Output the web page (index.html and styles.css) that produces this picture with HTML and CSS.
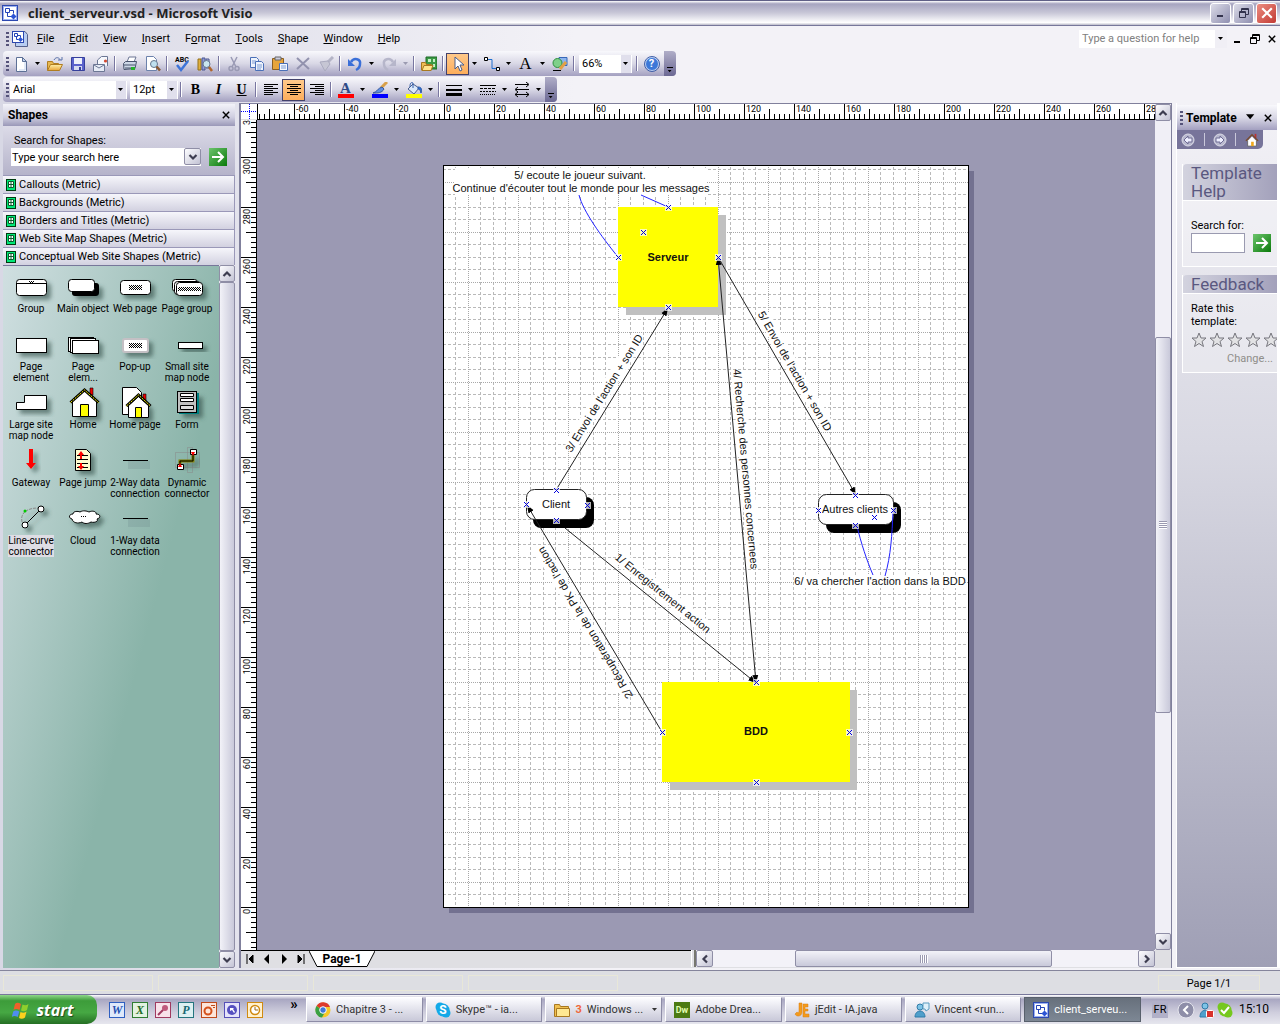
FILE: index.html
```html
<!DOCTYPE html>
<html lang="en">
<head>
<meta charset="utf-8">
<title>client_serveur.vsd - Microsoft Visio</title>
<link rel="stylesheet" href="styles.css">
</head>
<body>
<svg class="sprite" aria-hidden="true">
  <defs>
    <linearGradient id="g-folder" x1="0" y1="0" x2="0" y2="1"><stop offset="0" stop-color="#fff0a8"/><stop offset="1" stop-color="#e9a53a"/></linearGradient>
    <linearGradient id="g-green" x1="0" y1="0" x2="1" y2="1"><stop offset="0" stop-color="#6cc46c"/><stop offset="1" stop-color="#0a7a0a"/></linearGradient>
    <pattern id="dither" width="2" height="2" patternUnits="userSpaceOnUse"><path d="M0 0h1v1H0zM1 1h1v1H1z"/></pattern>
    <filter id="soft" x="-30%" y="-30%" width="180%" height="180%"><feDropShadow dx="4" dy="4" stdDeviation="2" flood-color="#30504a" flood-opacity=".6"/></filter>
  </defs>
  <symbol id="i-visio" viewBox="0 0 16 16"><rect x=".5" y=".5" width="15" height="15" fill="#fff" stroke="#2c48b0"/><rect x="1.500" y="1.500" width="13" height="13" fill="none" stroke="#9db2f2"/><path d="M3.500 3.500h4v4h-4zM8 5.500h3.500v3M5.500 8v3.500h4" fill="none" stroke="#2444b8"/><path d="M11.500 8.500l3 3-3 3-3-3z" fill="#2d55d4"/></symbol>
  <symbol id="i-visiodoc" viewBox="0 0 18 18"><path d="M7 1.500h7l2.500 3v12H4.500V12" fill="#b8cdf2" stroke="#55608c"/><rect x="1.500" y="1.500" width="11" height="11" fill="#fff" stroke="#2c48b0"/><path d="M3.500 3.500h3v3h-3zM7 5.500h2.500v2M5.500 7v2.500h2" fill="none" stroke="#2444b8"/><path d="M9.500 7l2.500 2.500L9.500 12 7 9.500z" fill="#2d55d4"/></symbol>
  <symbol id="i-new" viewBox="0 0 16 16"><path d="M3.500 1.500h6l4 4v10h-10z" fill="#fff" stroke="#5d7096"/><path d="M9.500 1.500v4h4z" fill="#c4d4f0" stroke="#5d7096"/><path d="M12 6v8H6" stroke="#c4d4f0" fill="none"/></symbol>
  <symbol id="i-open" viewBox="0 0 16 16"><path d="M.5 14V5.500h5l1 2h5V14z" fill="#e7b851" stroke="#b07d20"/><path d="M.5 14.500l3-6h12l-3 6z" fill="url(#g-folder)" stroke="#b07d20"/><path d="M7 4c2-4 6-2 6 0M11 4h4V1" fill="none" stroke="#5870a8"/></symbol>
  <symbol id="i-save" viewBox="0 0 16 16"><path d="M1.500 1.500h13v13h-12l-1-1z" fill="#5a62cc" stroke="#36409c"/><path d="M4 2h8v6H4z" fill="#edf0fa"/><path d="M4 10h8v4H4z" fill="#d5daf0"/><path d="M9 11h2v3H9z" fill="#36409c"/></symbol>
  <symbol id="i-mail" viewBox="0 0 16 16"><path d="M4.500 8V4l4-3.500h6V10" fill="#f6f8fd" stroke="#6c7794"/><path d="M.5 8.500h11v7H.5z" fill="#e6ebf6" stroke="#6c7794"/><path d="M1 9l5 3 5-3" fill="none" stroke="#6c7794"/><circle cx="12.500" cy="5" r="1.600" fill="#d34a32"/></symbol>
  <symbol id="i-print" viewBox="0 0 16 16"><path d="M5 6l2-5h7l-2 5" fill="#fff" stroke="#6c7794"/><path d="M1.500 7.500l2-2h11l-1.500 7-11 1z" fill="#ccd6e6" stroke="#47526c"/><path d="M2 9h11M3 12h9" stroke="#47526c"/><path d="M9 11h4v3H9z" fill="#26b12c"/></symbol>
  <symbol id="i-preview" viewBox="0 0 16 16"><path d="M1.500.5h7l3 3v11h-10z" fill="#fff" stroke="#6c82ac"/><circle cx="9" cy="8" r="3.500" fill="#bfe0ef" stroke="#66788f"/><path d="M11.500 10.500l3.500 4" stroke="#8a5a34" stroke-width="2.500"/></symbol>
  <symbol id="i-research" viewBox="0 0 16 16"><path d="M1 3h3v11H1z" fill="#e0b040" stroke="#937018"/><path d="M5 2h3v12H5z" fill="#8f9ad8" stroke="#4b5690"/><path d="M9 3h3v9H9z" fill="#b5b9e0" stroke="#4b5690"/><circle cx="9.500" cy="8" r="3.500" fill="#c9e6ef" stroke="#66788f"/><path d="M12 11l3 4" stroke="#b0662c" stroke-width="2.500"/></symbol>
  <symbol id="i-cut" viewBox="0 0 16 16"><path d="M5 1l5 10M11 1L6 11" stroke="#9a9ab4" stroke-width="1.500"/><circle cx="5" cy="12.500" r="2" fill="none" stroke="#9a9ab4" stroke-width="1.500"/><circle cx="11" cy="12.500" r="2" fill="none" stroke="#9a9ab4" stroke-width="1.500"/></symbol>
  <symbol id="i-copy" viewBox="0 0 16 16"><path d="M1.500 1.500h6l2 2v8h-8z" fill="#eef3fc" stroke="#4a70b8"/><path d="M6.500 5.500h6l2 2v7h-8z" fill="#eef3fc" stroke="#4a70b8"/><path d="M3 5h4M3 7h3M8 9h5M8 11h5M8 13h4" stroke="#7f9dd4"/></symbol>
  <symbol id="i-paste" viewBox="0 0 16 16"><path d="M.5 2.500h11v11H.5z" fill="#e7a43a" stroke="#8a5f22"/><path d="M3 1h6v3H3z" fill="#ccd" stroke="#666"/><path d="M7.500 7.500h8v7h-8z" fill="#f4f7fd" stroke="#4a70b8"/><path d="M9 10h5M9 12h5" stroke="#7f9dd4"/></symbol>
  <symbol id="i-delete" viewBox="0 0 16 16"><path d="M2 2l12 11M14 2L2 13" stroke="#9292ae" stroke-width="2"/></symbol>
  <symbol id="i-painter" viewBox="0 0 16 16"><path d="M15 1l-5 5" stroke="#b4b4c6" stroke-width="3"/><path d="M2 6l8-1 2 3-5 7z" fill="#c6c6d4" stroke="#aaaabf"/></symbol>
  <symbol id="i-undo" viewBox="0 0 16 16"><path d="M4 6c3-5 10-3 9 2 0 3-2 5-4 6" fill="none" stroke="#3a6fd8" stroke-width="2.500"/><path d="M1 3v7h7z" fill="#3a6fd8"/></symbol>
  <symbol id="i-redo" viewBox="0 0 16 16"><path d="M12 6C9 1 2 3 3 8c0 3 2 5 4 6" fill="none" stroke="#b6b6ca" stroke-width="2.500"/><path d="M15 3v7H8z" fill="#b6b6ca"/></symbol>
  <symbol id="i-stencil" viewBox="0 0 16 16"><path d="M5 1h11v12H5z" fill="#3b9b45" stroke="#1e6b28"/><path d="M7 3h3v3H7zM12 3h2v3h-2zM12 8h2v3h-2z" fill="#c7efc7"/><path d="M.5 14V6.500h4l1 2h5V14z" fill="#eebd55" stroke="#a87820"/><path d="M1 14.500l2-5h9l-2 5z" fill="#ffe38c" stroke="#a87820"/></symbol>
  <symbol id="i-pointer" viewBox="0 0 16 16"><path d="M5 1v12l3-3 2 5 2-1-2-5h4z" fill="#fff" stroke="#4a5e8c"/></symbol>
  <symbol id="i-connector" viewBox="0 0 16 16"><path d="M4 3.500h4v9h4" fill="none" stroke="#1f6fd0"/><path d="M.5 1.500h3v3h-3zM12.500 11.500h3v3h-3z" fill="#fff" stroke="#000"/></symbol>
  <symbol id="i-draw" viewBox="0 0 16 16"><path d="M7 1.500h8v8H7z" fill="#8db4ee" stroke="#3768b8"/><circle cx="5.500" cy="7" r="4.500" fill="#7fd08a" stroke="#2f8f40"/><path d="M14 6l-6 7" stroke="#e3a046" stroke-width="3"/><path d="M1 14.500h8" stroke="#000"/></symbol>
  <symbol id="i-left" viewBox="0 0 16 16"><path d="M1 2.500h14M1 4.500h9M1 6.500h14M1 8.500h9M1 10.500h14M1 12.500h9" stroke="#000"/></symbol>
  <symbol id="i-center" viewBox="0 0 16 16"><path d="M1 2.500h14M4 4.500h8M1 6.500h14M4 8.500h8M1 10.500h14M4 12.500h8" stroke="#000"/></symbol>
  <symbol id="i-right" viewBox="0 0 16 16"><path d="M1 2.500h14M6 4.500h9M1 6.500h14M6 8.500h9M1 10.500h14M6 12.500h9" stroke="#000"/></symbol>
  <symbol id="i-brush" viewBox="0 0 16 16"><path d="M15 0l-6 6" stroke="#d8a04a" stroke-width="3"/><path d="M10 5l2 2c-2 4-6 4-11 4 4-1 5-5 9-6z" fill="#5f8ee0" stroke="#34579c"/><path d="M0 12h16v4H0z" fill="#00f"/></symbol>
  <symbol id="i-fill" viewBox="0 0 16 16"><path d="M7 2l6 4-5 6-6-5z" fill="#dbe8fa" stroke="#4a5e8c"/><path d="M7 6V1c-2-1-3 0-3 4" fill="none" stroke="#2f5aa8"/><path d="M12 5c4 0 4 3 3 6-1-3-1-4-3-4z" fill="#2f6fd0" stroke="#2f5aa8"/><path d="M0 12h16v4H0z" fill="#ff0"/></symbol>
  <symbol id="i-weight" viewBox="0 0 16 16"><path d="M0 3.500h16" stroke="#000"/><path d="M0 8h16" stroke="#000" stroke-width="2"/><path d="M0 12.500h16" stroke="#000" stroke-width="3"/></symbol>
  <symbol id="i-dash" viewBox="0 0 16 16"><path d="M0 3.500h16" stroke="#000"/><path d="M0 6.500h16" stroke="#000" stroke-dasharray="3 1"/><path d="M0 9.500h16" stroke="#000" stroke-dasharray="2 1"/><path d="M0 12.500h16" stroke="#000" stroke-dasharray="1 1"/></symbol>
  <symbol id="i-ends" viewBox="0 0 16 16"><path d="M1 2.500h13M2 7.500h13M1 12.500h14M12 0l3 2.500-3 2.500M4 5L1 7.500 4 10M12 10l3 2.500-3 2.500M4 10l-3 2.500L4 15" fill="none" stroke="#000"/></symbol>
  <symbol id="i-drop" viewBox="0 0 6 4"><path d="M0 0h5L2.500 3z" fill="currentColor"/></symbol>
  <symbol id="i-chev" viewBox="0 0 10 10"><path d="M1.500 3L5 6.500 8.500 3" fill="none" stroke="#3d3d50" stroke-width="2.200"/></symbol>
  <symbol id="i-x" viewBox="0 0 10 10"><path d="M1 1l8 8M9 1L1 9" stroke="currentColor" stroke-width="1.800"/></symbol>
  <symbol id="i-go" viewBox="0 0 18 18"><rect width="18" height="18" fill="url(#g-green)"/><path d="M3 9h11M9 4l5 5-5 5" fill="none" stroke="#fff" stroke-width="2"/></symbol>
  <symbol id="i-stencilgrid" viewBox="0 0 10 12"><rect x=".5" y=".5" width="9" height="11" fill="#00e878" stroke="#003a10"/><path d="M2.500 2.500h5v6h-5zM5 2.500v6M2.500 5.500h5" fill="#fff" stroke="#0a5a2a"/></symbol>
  <symbol id="i-home" viewBox="0 0 16 16"><path d="M3 8h10v7H3z" fill="#fff" stroke="#666"/><path d="M11 1h2v5h-2z" fill="#b33"/><path d="M1 9l7-7 7 7" fill="none" stroke="#7a4a2a" stroke-width="1.500"/><path d="M3 9l5-5 5 5" fill="#fff"/><path d="M7 10h3v5H7z" fill="#f0a81c"/></symbol>
  <symbol id="i-navleft" viewBox="0 0 14 14"><circle cx="7" cy="7" r="6" fill="#b9b9cf" stroke="#d9d9e6"/><path d="M7 3L3 7l4 4V9h4V5H7z" fill="#eef" stroke="#6c6a92"/></symbol>
  <symbol id="i-navright" viewBox="0 0 14 14"><circle cx="7" cy="7" r="6" fill="#b9b9cf" stroke="#d9d9e6"/><path d="M7 3l4 4-4 4V9H3V5h4z" fill="#eef" stroke="#6c6a92"/></symbol>
  <symbol id="i-star" viewBox="0 0 16 16"><path d="M8 1l2 5h5l-4 3.500 1.500 5L8 11.500l-4.500 3 1.500-5L1 6h5z" fill="#e2e2e4" stroke="#77777e"/></symbol>
  <symbol id="i-restore" viewBox="0 0 12 12"><path d="M3.500 4V1.500h7v6H8M3.500 2.500h7M1.500 4.500h6v6h-6zM1.500 5.500h6" fill="none" stroke="currentColor"/></symbol>
  <symbol id="i-min" viewBox="0 0 12 12"><path d="M2 8h6v2H2z" fill="currentColor"/></symbol>
  <symbol id="i-flag" viewBox="0 0 20 18"><path d="M3 3c2-2 4-1 6 0L7.500 9C5.500 8 3.500 7.500 1.500 9z" fill="#f0602a"/><path d="M10.500 3.500c2 1 4 1 6-.5L15 9c-2 1.500-4 1.500-6 .5z" fill="#8fd02c"/><path d="M1.200 10.500c2-1.500 4-1 6 0L5.700 16c-2-1-4-1.500-6 0z" fill="#4f8df0"/><path d="M8.500 11c2 1 4 1 6-.5L13 16.500c-2 1.500-4 1.500-6 .5z" fill="#fcd01e"/></symbol>
</svg>

<header class="titlebar">
  <svg class="ic16"><use href="#i-visio"/></svg>
  <h1>client_serveur.vsd - Microsoft Visio</h1>
  <button class="win" aria-label="Minimize"><svg><use href="#i-min"/></svg></button>
  <button class="win" aria-label="Restore"><svg><use href="#i-restore"/></svg></button>
  <button class="win close" aria-label="Close"><svg><use href="#i-x"/></svg></button>
</header>

<nav class="menubar">
  <i class="grip"></i>
  <svg class="ic18"><use href="#i-visiodoc"/></svg>
  <div class="menus"><button><u>F</u>ile</button><button><u>E</u>dit</button><button><u>V</u>iew</button><button><u>I</u>nsert</button><button>F<u>o</u>rmat</button><button><u>T</u>ools</button><button><u>S</u>hape</button><button><u>W</u>indow</button><button><u>H</u>elp</button></div>
  <div class="ask"><input type="text" aria-label="Help question" placeholder="Type a question for help"><button aria-label="Recent questions"><svg class="drop"><use href="#i-drop"/></svg></button></div>
  <button class="doc" aria-label="Minimize document"><svg><use href="#i-min"/></svg></button>
  <button class="doc" aria-label="Restore document"><svg><use href="#i-restore"/></svg></button>
  <button class="doc" aria-label="Close document"><svg class="small"><use href="#i-x"/></svg></button>
</nav>

<div class="toolbars">
  <div class="toolbar" role="toolbar" aria-label="Standard">
    <i class="grip"></i>
    <button class="tb" aria-label="New"><svg><use href="#i-new"/></svg></button><button class="arr" aria-label="New options"><svg class="drop"><use href="#i-drop"/></svg></button>
    <button class="tb" aria-label="Open"><svg><use href="#i-open"/></svg></button>
    <button class="tb" aria-label="Save"><svg><use href="#i-save"/></svg></button>
    <button class="tb" aria-label="E-mail"><svg><use href="#i-mail"/></svg></button>
    <i class="sep"></i>
    <button class="tb" aria-label="Print"><svg><use href="#i-print"/></svg></button>
    <button class="tb" aria-label="Print preview"><svg><use href="#i-preview"/></svg></button>
    <i class="sep"></i>
    <button class="tb" aria-label="Spelling"><svg viewBox="0 0 16 16"><text x="8" y="6" class="abc">ABC</text><path d="M3 9l4 5 7-9" fill="none" stroke="#3d74d8" stroke-width="2.500"/></svg></button>
    <button class="tb" aria-label="Research"><svg><use href="#i-research"/></svg></button>
    <i class="sep"></i>
    <button class="tb" aria-label="Cut"><svg><use href="#i-cut"/></svg></button>
    <button class="tb" aria-label="Copy"><svg><use href="#i-copy"/></svg></button>
    <button class="tb" aria-label="Paste"><svg><use href="#i-paste"/></svg></button>
    <button class="tb" aria-label="Delete"><svg><use href="#i-delete"/></svg></button>
    <button class="tb" aria-label="Format painter"><svg><use href="#i-painter"/></svg></button>
    <i class="sep"></i>
    <button class="tb" aria-label="Undo"><svg><use href="#i-undo"/></svg></button><button class="arr" aria-label="Undo list"><svg class="drop"><use href="#i-drop"/></svg></button>
    <button class="tb" aria-label="Redo"><svg><use href="#i-redo"/></svg></button><button class="arr off" aria-label="Redo list"><svg class="drop"><use href="#i-drop"/></svg></button>
    <i class="sep"></i>
    <button class="tb" aria-label="Shapes"><svg><use href="#i-stencil"/></svg></button>
    <i class="sep"></i>
    <button class="tb on" aria-label="Pointer tool"><svg><use href="#i-pointer"/></svg></button><button class="arr" aria-label="Pointer options"><svg class="drop"><use href="#i-drop"/></svg></button>
    <button class="tb" aria-label="Connector tool"><svg><use href="#i-connector"/></svg></button><button class="arr" aria-label="Connector options"><svg class="drop"><use href="#i-drop"/></svg></button>
    <button class="tb letter big">A</button><button class="arr" aria-label="Text options"><svg class="drop"><use href="#i-drop"/></svg></button>
    <button class="tb" aria-label="Drawing tools"><svg><use href="#i-draw"/></svg></button>
    <i class="sep"></i>
    <div class="combo zoom"><select aria-label="Zoom"><option>66%</option></select><svg class="drop"><use href="#i-drop"/></svg></div>
    <i class="sep"></i>
    <button class="tb" aria-label="Help"><span class="help-dot">?</span></button>
    <button class="cap" aria-label="Toolbar options"><svg><use href="#i-drop"/></svg></button>
  </div>
  <div class="toolbar" role="toolbar" aria-label="Formatting">
    <i class="grip"></i>
    <div class="combo font"><select aria-label="Font"><option>Arial</option></select><svg class="drop"><use href="#i-drop"/></svg></div>
    <div class="combo size"><select aria-label="Font size"><option>12pt</option></select><svg class="drop"><use href="#i-drop"/></svg></div>
    <i class="sep"></i>
    <button class="tb letter">B</button><button class="tb letter"><em>I</em></button><button class="tb letter"><u>U</u></button>
    <i class="sep"></i>
    <button class="tb" aria-label="Align left"><svg><use href="#i-left"/></svg></button>
    <button class="tb on" aria-label="Center"><svg><use href="#i-center"/></svg></button>
    <button class="tb" aria-label="Align right"><svg><use href="#i-right"/></svg></button>
    <i class="sep"></i>
    <button class="tb" aria-label="Text color"><span class="fontcolor">A</span></button><button class="arr" aria-label="Text colors"><svg class="drop"><use href="#i-drop"/></svg></button>
    <button class="tb" aria-label="Line color"><svg><use href="#i-brush"/></svg></button><button class="arr" aria-label="Line colors"><svg class="drop"><use href="#i-drop"/></svg></button>
    <button class="tb" aria-label="Fill color"><svg><use href="#i-fill"/></svg></button><button class="arr" aria-label="Fill colors"><svg class="drop"><use href="#i-drop"/></svg></button>
    <i class="sep"></i>
    <button class="tb" aria-label="Line weight"><svg><use href="#i-weight"/></svg></button><button class="arr" aria-label="Line weights"><svg class="drop"><use href="#i-drop"/></svg></button>
    <button class="tb" aria-label="Line pattern"><svg><use href="#i-dash"/></svg></button><button class="arr" aria-label="Line patterns"><svg class="drop"><use href="#i-drop"/></svg></button>
    <button class="tb" aria-label="Line ends"><svg><use href="#i-ends"/></svg></button><button class="arr" aria-label="Line end styles"><svg class="drop"><use href="#i-drop"/></svg></button>
    <button class="cap" aria-label="Toolbar options"><svg><use href="#i-drop"/></svg></button>
  </div>
</div>

<main class="work">
  <aside class="shapes">
    <div class="panehead"><h2>Shapes</h2><button aria-label="Close shapes"><svg><use href="#i-x"/></svg></button></div>
    <form class="find">
      <label for="q">Search for Shapes:</label>
      <div class="findrow">
        <div class="findbox"><input id="q" type="text" value="Type your search here"><button type="button" class="sb" aria-label="Recent searches"><svg><use href="#i-chev"/></svg></button></div>
        <button type="button" class="go" aria-label="Search"><svg><use href="#i-go"/></svg></button>
      </div>
    </form>
    <button class="stencil"><svg><use href="#i-stencilgrid"/></svg>Callouts (Metric)</button>
    <button class="stencil"><svg><use href="#i-stencilgrid"/></svg>Backgrounds (Metric)</button>
    <button class="stencil"><svg><use href="#i-stencilgrid"/></svg>Borders and Titles (Metric)</button>
    <button class="stencil"><svg><use href="#i-stencilgrid"/></svg>Web Site Map Shapes (Metric)</button>
    <button class="stencil"><svg><use href="#i-stencilgrid"/></svg>Conceptual Web Site Shapes (Metric)</button>
    <div class="stencilbody">
      <ul class="masters">
        <li><svg viewBox="0 0 44 32"><g filter="url(#soft)" fill="#fff" stroke="#000"><rect x="7.500" y="8.500" width="30" height="16" rx="3"/></g><path d="M8 12.500h29" stroke="#000"/><path d="M20 10h5v2h-5z" fill="url(#dither)"/></svg><span>Group</span></li>
        <li><svg viewBox="0 0 44 32"><g filter="url(#soft)"><rect x="11" y="12" width="27" height="13" rx="3"/></g><rect x="7.500" y="8.500" width="26" height="12" rx="3" fill="#fff" stroke="#000"/></svg><span>Main object</span></li>
        <li><svg viewBox="0 0 44 32"><rect x="7.500" y="9.500" width="30" height="14" rx="3" fill="#fff" stroke="#000" filter="url(#soft)"/><path d="M16 14h13v5H16z" fill="url(#dither)"/></svg><span>Web page</span></li>
        <li><svg viewBox="0 0 44 32"><g filter="url(#soft)" fill="#fff" stroke="#000"><rect x="7.500" y="8.500" width="25" height="12" rx="3"/><rect x="9.500" y="10.500" width="26" height="13" rx="3"/><rect x="11.500" y="11.500" width="26" height="13" rx="3"/></g><path d="M13 16h23v4H13z" fill="url(#dither)"/></svg><span>Page group</span></li>
        <li><svg viewBox="0 0 44 32"><rect x="7.500" y="9.500" width="30" height="14" fill="#fff" stroke="#000" filter="url(#soft)"/></svg><span>Page<br>element</span></li>
        <li><svg viewBox="0 0 44 32"><g filter="url(#soft)" fill="#fff" stroke="#000"><rect x="7.500" y="8.500" width="25" height="14"/><rect x="9.500" y="9.500" width="25" height="14"/><rect x="11.500" y="11.500" width="26" height="13"/></g></svg><span>Page<br>elem...</span></li>
        <li><svg viewBox="0 0 44 32"><rect x="10" y="10" width="25" height="13" rx="2" fill="#fff" stroke="#c4c0c4" stroke-width="2" filter="url(#soft)"/><path d="M16 14h13v5H16z" fill="url(#dither)"/></svg><span>Pop-up</span></li>
        <li><svg viewBox="0 0 44 32"><rect x="13.500" y="13.500" width="24" height="6" fill="#fff" stroke="#000" filter="url(#soft)"/></svg><span>Small site map node</span></li>
        <li><svg viewBox="0 0 44 32"><path d="M7.500 22.500v-7h8v-7h22v14z" fill="#fff" stroke="#000" filter="url(#soft)"/></svg><span>Large site map node</span></li>
        <li><svg viewBox="0 0 44 32"><path d="M11.500 12.500L23.500 2.500l12 10v17h-24z" fill="#fff" stroke="#000" filter="url(#soft)"/><path d="M29 1h3v7h-3z" fill="#e00" stroke="#000" stroke-width=".6"/><path d="M9.500 15.500L23.500 3l14 12.500" fill="none" stroke="#000" stroke-width="3"/><path d="M9.500 15.500L23.500 3l14 12.500" fill="none" stroke="#ff0" stroke-dasharray="2 1"/><path d="M19.500 17.500h8v12h-8z" fill="#ff0" stroke="#000"/></svg><span>Home</span></li>
        <li><svg viewBox="0 0 44 32"><path d="M9.500.5h14l5 5v22h-19z" fill="#fff" stroke="#000"/><path d="M15.500 18.500l10-9 10 9v12h-20z" fill="#fff" stroke="#000" filter="url(#soft)"/><path d="M30 7h3v7h-3z" fill="#e00" stroke="#000" stroke-width=".6"/><path d="M13.500 19L25.500 8l12 11" fill="none" stroke="#000" stroke-width="3"/><path d="M13.500 19L25.500 8l12 11" fill="none" stroke="#ff0" stroke-dasharray="2 1"/><path d="M22.500 20.500h6v10h-6z" fill="#ff0" stroke="#000"/></svg><span>Home page</span></li>
        <li><svg viewBox="0 0 44 32"><path d="M14 6h20v21H14z" fill="#008080" filter="url(#soft)"/><rect x="12.500" y="4.500" width="19" height="21" fill="#c0c0c0" stroke="#000"/><path d="M15.500 6.500h13v3h-13zM15.500 11.500h13v3h-13z" fill="#fff" stroke="#000"/><path d="M15.500 18.500h13v4h-13z" fill="#ddd" stroke="#000"/></svg><span>Form</span></li>
        <li><svg viewBox="0 0 44 32"><path d="M20 4h4v14h3l-5 6-5-6h3z" fill="#f00" filter="url(#soft)"/></svg><span>Gateway</span></li>
        <li><svg viewBox="0 0 44 32"><path d="M14.500 4.500h11l4 4v17h-15z" fill="#fffbd0" stroke="#000" filter="url(#soft)"/><path d="M16 10.500h11M16 14.500h11M16 18.500h11M16 22.500h11" stroke="#000"/><path d="M20 25l-3-4h2v-3h2v3h2zM20 6l-3 4h2v4h2v-4h2z" fill="#f00"/></svg><span>Page jump</span></li>
        <li><svg viewBox="0 0 44 32"><path d="M10 15.500h25" stroke="#000"/><path d="M15 16h22v8H15z" fill="#456" opacity=".12"/></svg><span>2-Way data connection</span></li>
        <li><svg viewBox="0 0 44 32"><path d="M10.500 7.500h24v15h-24zM22.500 2.500h5v25h-5z" fill="none" stroke="#888" stroke-dasharray="1 1"/><path d="M15 20v-4h13v-7" fill="none" stroke="#808000" stroke-width="3" filter="url(#soft)"/><path d="M15 20v-4h13v-7" fill="none" stroke="#000"/><path d="M12.500 19.500h6v5h-6zM25.500 4.500h6v5h-6z" fill="#fff" stroke="#000"/><path d="M15 18l2 4h-4zM28 11l2-4h-4z" fill="#f00"/></svg><span>Dynamic connector</span></li>
        <li class="sel"><svg viewBox="0 0 44 32"><g filter="url(#soft)"><path d="M16 22L32 6" stroke="#000"/><path d="M13 19c-2-9 5-14 16-14" fill="none" stroke="#888" stroke-dasharray="3 1"/><circle cx="32" cy="6" r="3" fill="#fff" stroke="#000"/><circle cx="16" cy="22" r="3" fill="#fff" stroke="#000"/></g><circle cx="16" cy="8" r="1.500" fill="#0c0"/></svg><span>Line-curve connector</span></li>
        <li><svg viewBox="0 0 44 32"><path d="M11 16c-4-1-3-5 1-5 0-3 5-3 7-2 3-2 7-1 9 0 4-2 8 0 7 2 5 0 5 4 1 5 2 3-4 4-6 3-3 2-7 2-9 0-4 2-9 1-10-3z" fill="#fff" stroke="#000" filter="url(#soft)"/><path d="M20 13.500h6" stroke="#000" stroke-dasharray="1 1"/></svg><span>Cloud</span></li>
        <li><svg viewBox="0 0 44 32"><path d="M10 15.500h25" stroke="#000"/><path d="M15 16h22v8H15z" fill="#456" opacity=".12"/></svg><span>1-Way data connection</span></li>
      </ul>
      <div class="vscroll">
        <button class="sb" aria-label="Scroll up"><svg class="up"><use href="#i-chev"/></svg></button>
        <i class="thumb"></i>
        <button class="sb" aria-label="Scroll down"><svg><use href="#i-chev"/></svg></button>
      </div>
    </div>
  </aside>

  <section class="canvas" aria-label="Drawing">
    <svg class="corner"><path d="M0 7.500h16M8.500 0v15" stroke="#00f" stroke-dasharray="1 1"/></svg>
    <svg class="hruler">
      <defs><pattern id="ticks-h" x="36" width="50" height="15" patternUnits="userSpaceOnUse"><path d="M.5 0v15M5.500 10v5M10.500 10v5M15.500 10v5M20.500 10v5M25.500 5v10M30.500 10v5M35.500 10v5M40.500 10v5M45.500 10v5" stroke="#000"/></pattern></defs>
      <rect width="100%" height="15" fill="url(#ticks-h)"/>
      <text x="38" y="8">-60</text><text x="88" y="8">-40</text><text x="138" y="8">-20</text><text x="188" y="8">0</text><text x="238" y="8">20</text><text x="288" y="8">40</text><text x="338" y="8">60</text><text x="388" y="8">80</text><text x="438" y="8">100</text><text x="488" y="8">120</text><text x="538" y="8">140</text><text x="588" y="8">160</text><text x="638" y="8">180</text><text x="688" y="8">200</text><text x="738" y="8">220</text><text x="788" y="8">240</text><text x="838" y="8">260</text><text x="888" y="8">28</text>
    </svg>
    <svg class="vruler">
      <defs><pattern id="ticks-v" y="37" width="15" height="50" patternUnits="userSpaceOnUse"><path d="M0 .5h15M10 5.500h5M10 10.500h5M10 15.500h5M10 20.500h5M5 25.500h10M10 30.500h5M10 35.500h5M10 40.500h5M10 45.500h5" stroke="#000"/></pattern></defs>
      <rect width="15" height="100%" fill="url(#ticks-v)"/>
      <g text-anchor="end"><text transform="translate(9 0) rotate(-90)">3</text><text transform="translate(9 39) rotate(-90)">300</text><text transform="translate(9 89) rotate(-90)">280</text><text transform="translate(9 139) rotate(-90)">260</text><text transform="translate(9 189) rotate(-90)">240</text><text transform="translate(9 239) rotate(-90)">220</text><text transform="translate(9 289) rotate(-90)">200</text><text transform="translate(9 339) rotate(-90)">180</text><text transform="translate(9 389) rotate(-90)">160</text><text transform="translate(9 439) rotate(-90)">140</text><text transform="translate(9 489) rotate(-90)">120</text><text transform="translate(9 539) rotate(-90)">100</text><text transform="translate(9 589) rotate(-90)">80</text><text transform="translate(9 639) rotate(-90)">60</text><text transform="translate(9 689) rotate(-90)">40</text><text transform="translate(9 739) rotate(-90)">20</text><text transform="translate(9 789) rotate(-90)">0</text></g>
    </svg>
    <svg class="drawing">
      <defs>
        <pattern id="grid" x="443" y="157" width="50" height="50" patternUnits="userSpaceOnUse">
          <path d="M.5 0v50M12.500 0v50M37.500 0v50M0 .5h50M0 12.500h50M0 37.500h50" stroke="#b9b9b9" stroke-dasharray="3 2"/>
          <path d="M25.500 0v50M0 25.500h50" stroke="#a8a8a8" stroke-dasharray="1 1"/>
        </pattern>
        <marker id="head" viewBox="0 0 8 8" refX="8" refY="4" markerWidth="8" markerHeight="8" orient="auto-start-reverse"><path d="M0 1l8 3-8 3z"/></marker>
        <g id="pt"><path d="M-3-3h7v7h-7z" fill="#fff" fill-opacity=".7"/><path d="M-2-2l5 5M3-2l-5 5" stroke="#00d" fill="none"/></g>
      </defs>
      <g transform="translate(-257 -120)">
        <rect x="449" y="171" width="525" height="742" fill="#737190"/>
        <rect x="443.500" y="165.500" width="525" height="742" fill="#fff" stroke="#000"/>
        <rect x="444" y="166" width="524" height="741" fill="url(#grid)"/>
        <g fill="#fff">
          <rect x="455" y="168" width="251" height="27"/>
          <rect x="796" y="575" width="169" height="13"/>
          <rect x="-64" y="-7" width="128" height="13" transform="translate(604 393) rotate(-58)"/>
          <rect x="-64" y="-7" width="128" height="13" transform="translate(795 371) rotate(60)"/>
          <rect x="-97" y="-7" width="194" height="13" transform="translate(746 469) rotate(85)"/>
          <rect x="-56" y="-7" width="112" height="13" transform="translate(663 593) rotate(39)"/>
          <rect x="-82" y="-7" width="164" height="13" transform="translate(585 623) rotate(-121)"/>
        </g>
        <g fill="#c0c0c0"><rect x="626" y="215" width="100" height="100"/><rect x="670" y="690" width="187" height="100"/></g>
        <g fill="#ff0"><rect x="618" y="207" width="100" height="100"/><rect x="662" y="682" width="188" height="100"/></g>
        <rect x="533" y="497" width="61" height="31" rx="8"/><rect x="826" y="502" width="75" height="31" rx="8"/>
        <g fill="#fff" stroke="#222"><rect x="526.500" y="489.500" width="60" height="30" rx="8"/><rect x="818.500" y="494.500" width="75" height="30" rx="8"/></g>
        <g stroke="#222" fill="none">
          <path d="M556 490L668 308" marker-end="url(#head)"/>
          <path d="M718 257L856 495" marker-end="url(#head)"/>
          <path d="M718 257L756 683" marker-start="url(#head)" marker-end="url(#head)"/>
          <path d="M565 528L756 683" marker-end="url(#head)"/>
          <path d="M662 732L527 505" marker-end="url(#head)"/>
        </g>
        <g stroke="#22f" fill="none">
          <path d="M579 195C583 211 601 236 618 257M641 195L668 207M857 526C861 543 867 561 873 575M893 511C892 535 891 555 885 576"/>
        </g>
        <g class="label">
          <text x="580" y="179">5/ ecoute le joueur suivant.</text>
          <text x="581" y="192">Continue d'écouter tout le monde pour les messages</text>
          <text x="880" y="585">6/ va chercher l'action dans la BDD</text>
          <text x="556" y="508">Client</text>
          <text x="855" y="513">Autres clients</text>
          <text x="668" y="261" class="strong">Serveur</text>
          <text x="756" y="735" class="strong">BDD</text>
          <text y="4" transform="translate(604 393) rotate(-58)">3/ Envoi de l'action + son ID</text>
          <text y="4" transform="translate(795 371) rotate(60)">5/ Envoi de l'action + son ID</text>
          <text y="4" transform="translate(746 469) rotate(85)">4/ Recherche des personnes concernees</text>
          <text y="4" transform="translate(663 593) rotate(39)">1/ Enregistrement action</text>
          <text y="4" transform="translate(585 623) rotate(-121)">2/ Récupération de la PK de l'action</text>
        </g>
        <use href="#pt" x="668" y="207"/><use href="#pt" x="643" y="232"/><use href="#pt" x="618" y="257"/><use href="#pt" x="718" y="257"/><use href="#pt" x="668" y="307"/>
        <use href="#pt" x="556" y="490"/><use href="#pt" x="526" y="504"/><use href="#pt" x="587" y="505"/><use href="#pt" x="556" y="520"/>
        <use href="#pt" x="855" y="495"/><use href="#pt" x="818" y="510"/><use href="#pt" x="893" y="510"/><use href="#pt" x="874" y="517"/><use href="#pt" x="855" y="525"/>
        <use href="#pt" x="756" y="682"/><use href="#pt" x="662" y="732"/><use href="#pt" x="849" y="732"/><use href="#pt" x="756" y="782"/>
      </g>
    </svg>
    <div class="vscroll main">
      <button class="sb" aria-label="Scroll up"><svg class="up"><use href="#i-chev"/></svg></button>
      <i class="track before"></i><i class="thumb ribbed"></i><i class="track after"></i>
      <button class="sb" aria-label="Scroll down"><svg><use href="#i-chev"/></svg></button>
    </div>
    <div class="pages">
      <button aria-label="First page"><svg viewBox="0 0 8 10"><path d="M1 0v10M7 1L3 5l4 4z" stroke="#000"/></svg></button>
      <button aria-label="Previous page"><svg viewBox="0 0 8 10"><path d="M6 0L1 5l5 5z"/></svg></button>
      <button aria-label="Next page"><svg viewBox="0 0 8 10"><path d="M2 0l5 5-5 5z"/></svg></button>
      <button aria-label="Last page"><svg viewBox="0 0 8 10"><path d="M7 0v10M1 1l4 4-4 4z" stroke="#000"/></svg></button>
      <button class="tab"><svg viewBox="0 0 66 17"><path d="M0 0l8 15.500h50L66 0" fill="#fff" stroke="#000"/></svg><b>Page-1</b></button>
    </div>
    <div class="hscroll">
      <i class="split"></i>
      <button class="sb" aria-label="Scroll left"><svg class="lt"><use href="#i-chev"/></svg></button>
      <i class="track before"></i><i class="thumb ribbed"></i><i class="track after"></i>
      <button class="sb" aria-label="Scroll right"><svg class="rt"><use href="#i-chev"/></svg></button>
    </div>
  </section>

  <aside class="task">
    <div class="taskhead"><i class="grip"></i><h2>Template</h2><button aria-label="Other task panes"><svg class="tri"><use href="#i-drop"/></svg></button><button aria-label="Close pane"><svg class="small"><use href="#i-x"/></svg></button></div>
    <div class="tasknav"><button aria-label="Back"><svg><use href="#i-navleft"/></svg></button><i></i><button aria-label="Forward"><svg><use href="#i-navright"/></svg></button><i></i><button aria-label="Home"><svg><use href="#i-home"/></svg></button></div>
    <section class="card help">
      <h3>Template Help</h3>
      <div class="cardbody"><label for="hs">Search for:</label><div class="row"><input id="hs" type="text"><button class="go" aria-label="Search help"><svg><use href="#i-go"/></svg></button></div></div>
    </section>
    <section class="card feedback">
      <h3>Feedback</h3>
      <div class="cardbody"><p>Rate this template:</p><div class="stars"><button aria-label="1 star"><svg><use href="#i-star"/></svg></button><button aria-label="2 stars"><svg><use href="#i-star"/></svg></button><button aria-label="3 stars"><svg><use href="#i-star"/></svg></button><button aria-label="4 stars"><svg><use href="#i-star"/></svg></button><button aria-label="5 stars"><svg><use href="#i-star"/></svg></button></div><a href="#change">Change...</a></div>
    </section>
  </aside>
</main>

<footer class="status"><span></span><span></span><span></span><span></span><span class="pageno">Page 1/1</span></footer>

<div class="taskbar">
  <button class="start"><svg><use href="#i-flag"/></svg>start</button>
  <div class="quick">
    <button aria-label="Word"><svg viewBox="0 0 16 16"><rect x=".5" y=".5" width="15" height="15" fill="#dfe9fb" stroke="#2f5fc0"/><text x="8" y="12" class="app" fill="#2450b0">W</text></svg></button>
    <button aria-label="Excel"><svg viewBox="0 0 16 16"><rect x=".5" y=".5" width="15" height="15" fill="#e2f2e0" stroke="#2f7d32"/><text x="8" y="12" class="app" fill="#1f6d26">X</text></svg></button>
    <button aria-label="Access"><svg viewBox="0 0 16 16"><rect x=".5" y=".5" width="15" height="15" fill="#f8e2ea" stroke="#a03a60"/><circle cx="10" cy="6" r="3" fill="#c0587c"/><path d="M8 8l-5 5" stroke="#a03a60" stroke-width="2"/></svg></button>
    <button aria-label="Publisher"><svg viewBox="0 0 16 16"><rect x=".5" y=".5" width="15" height="15" fill="#ddf0f2" stroke="#24757f"/><text x="8" y="12" class="app" fill="#186872">P</text></svg></button>
    <button aria-label="PowerPoint"><svg viewBox="0 0 16 16"><rect x=".5" y=".5" width="15" height="15" fill="#fde5da" stroke="#c04a1c"/><circle cx="7" cy="9" r="3.500" fill="none" stroke="#d4511c" stroke-width="2"/><path d="M10 3.500h4M12 5.500h2" stroke="#c04a1c"/></svg></button>
    <button aria-label="InfoPath"><svg viewBox="0 0 16 16"><rect x=".5" y=".5" width="15" height="15" fill="#e6e4fa" stroke="#5650b8"/><circle cx="8" cy="8" r="5" fill="#5650c0"/><path d="M6 6h4l-1 1 2 3-1 1-2-3-2 1z" fill="#fff"/></svg></button>
    <button aria-label="Outlook"><svg viewBox="0 0 16 16"><rect x=".5" y=".5" width="15" height="15" fill="#fff0cc" stroke="#d08a10"/><circle cx="8" cy="8" r="4.500" fill="#fff" stroke="#d08a10" stroke-width="1.500"/><path d="M8 5v3h3" fill="none" stroke="#a06a10"/></svg></button>
  </div>
  <button class="more" aria-label="More icons">»</button>
  <div class="windows">
    <button><svg viewBox="0 0 16 16"><circle cx="8" cy="8" r="7.500" fill="#f6c927"/><path d="M8 8L1.500 4A7.500 7.500 0 0 1 15 5H8z" fill="#dd3a2c"/><path d="M1.500 4A7.500 7.500 0 0 0 7 15.500L10 10z" fill="#3aa043"/><circle cx="8" cy="8" r="3.300" fill="#3f78d8" stroke="#fff"/></svg><span>Chapitre 3 - ...</span></button>
    <button><svg viewBox="0 0 16 16"><circle cx="5" cy="5" r="4.500" fill="#14a9e8"/><circle cx="11" cy="11" r="4.500" fill="#14a9e8"/><circle cx="8" cy="8" r="6.500" fill="#14a9e8"/><text x="8" y="12" class="skype">S</text></svg><span>Skype™ - ia...</span></button>
    <button><svg viewBox="0 0 16 16"><path d="M.5 14.500v-12h5l1 2h8v10z" fill="#f0c050" stroke="#a87820"/><path d="M2.500 14.500v-8h13v8z" fill="#ffe892" stroke="#a87820"/></svg><b>3</b><span>Windows ...</span><svg class="drop"><use href="#i-drop"/></svg></button>
    <button><svg viewBox="0 0 16 16"><rect width="16" height="16" fill="#4c7a12"/><text x="8" y="11" class="dw">Dw</text></svg><span>Adobe Drea...</span></button>
    <button><svg viewBox="0 0 16 16"><path d="M5 1h3v9c0 5-6 5-7 2l2-2c1 1 2 1 2-1zM9 2h5v3h-3v2h3v2h-3v3h4v3H9z" fill="#f39a1c" stroke="#d87c10" stroke-width=".5"/></svg><span>jEdit - IA.java</span></button>
    <button><svg viewBox="0 0 16 16"><circle cx="6" cy="5" r="3" fill="#7ec3e6" stroke="#2f7ba8"/><path d="M1 15c0-8 10-8 10 0z" fill="#4f9fcb" stroke="#2f7ba8"/><path d="M9 1h6v6l-3 2-1-2H9z" fill="#dff0fa" stroke="#5a9cc0"/></svg><span>Vincent &lt;run...</span></button>
    <button class="current"><svg><use href="#i-visio"/></svg><span>client_serveu...</span></button>
  </div>
  <span class="lang">FR</span>
  <div class="tray">
    <button aria-label="Show hidden icons"><svg viewBox="0 0 18 18"><circle cx="9" cy="9" r="8" fill="#8e8ea8" stroke="#e6e6ee"/><path d="M11 5L7 9l4 4" fill="none" stroke="#fff" stroke-width="2"/></svg></button>
    <svg viewBox="0 0 16 16"><circle cx="7" cy="4" r="3" fill="#7ec3e6" stroke="#2f7ba8"/><path d="M2 15c0-9 10-9 10 0z" fill="#4f9fcb" stroke="#2f7ba8"/><rect x="8.500" y="8.500" width="7" height="7" rx="1" fill="#d8322c" stroke="#fff"/></svg>
    <svg viewBox="0 0 16 16"><circle cx="5" cy="5" r="4.500" fill="#76c81e"/><circle cx="11" cy="11" r="4.500" fill="#76c81e"/><circle cx="8" cy="8" r="6.500" fill="#76c81e"/><path d="M4 8l3 3 5-6" fill="none" stroke="#fff" stroke-width="2"/></svg>
    <time>15:10</time>
  </div>
</div>
</body>
</html>
```
FILE: styles.css
```css
* { box-sizing: border-box; }
:root {
  --ui: Roboto, "Liberation Sans", sans-serif;
  --bar: linear-gradient(#f8f8fc, #d9d8e6 50%, #a3a0c0);
  --chip: linear-gradient(90deg, #f2f2f8, #c9c9da);
}
html, body { height: 100%; }
body {
  margin: 0;
  display: flex;
  flex-direction: column;
  min-height: 600px;
  overflow: hidden;
  background: linear-gradient(90deg, #d8d8e5, #f3f2f7 45%);
  color: #000;
  font: 11px/13px var(--ui);
}
button, input, select { font: inherit; color: inherit; border: 0; padding: 0; margin: 0; background: none; border-radius: 0; }
button { display: flex; align-items: center; justify-content: center; flex: none; }
select { appearance: none; }
h1, h2, h3, p, ul { margin: 0; padding: 0; font: inherit; }
svg { display: block; flex: none; }
.sprite { position: absolute; width: 0; height: 0; }
.ic16 { width: 16px; height: 16px; }
.ic18 { width: 18px; height: 18px; }
.drop { width: 6px; height: 4px; }
.small { width: 8px; height: 8px; }
.grip { width: 3px; height: 14px; flex: none; background: repeating-linear-gradient(#55537a 0 2px, transparent 2px 4px); }

/* Title bar */
.titlebar {
  display: flex; align-items: center; gap: 2px; flex: none;
  height: 26px; padding: 0 3px 0 2px;
  border-top: 1px solid #5f5f86; border-bottom: 1px solid #77779a;
  background: linear-gradient(#fff, #a6a4c0 12%, #c9c8d8 50%, #fff 90%, #b9b9c8);
}
.titlebar h1 { flex: 1; padding-left: 8px; color: #222; font: bold 13px/18px "Open Sans", var(--ui); }
.win { width: 21px; height: 21px; border: 1px solid #fff; border-radius: 3px; background: linear-gradient(135deg, #dcdce8, #8f8fb0); color: #33334d; }
.win svg { width: 12px; height: 12px; }
.win.close { background: linear-gradient(135deg, #ec8d80, #c23a34); color: #fff; }

/* Menu bar */
.menubar { display: flex; align-items: center; flex: none; height: 25px; padding: 0 0 0 6px; }
.menubar .ic18 { margin: 0 1px 0 2px; }
.menus { display: flex; gap: 1px; }
.menus button { padding: 0 7px; height: 20px; }
.ask { display: flex; width: 148px; height: 18px; margin: 0 2px 0 auto; background: #fff; }
.ask input { flex: 1; min-width: 0; padding-left: 3px; }
.ask input::placeholder { color: #808080; opacity: 1; }
.ask button { width: 12px; background: #f0eff5; }
.doc { width: 17px; }
.doc svg { width: 12px; height: 12px; }
.doc .small { width: 8px; height: 8px; }

/* Toolbars */
.toolbars { display: flex; flex-direction: column; align-items: flex-start; gap: 1px; flex: none; padding-left: 3px; }
.toolbar { display: flex; align-items: center; height: 25px; padding-left: 3px; border-radius: 4px; background: var(--bar); }
.tb { width: 23px; height: 22px; }
.tb svg { width: 16px; height: 16px; overflow: visible; }
.abc { font: bold 7px var(--ui); text-anchor: middle; }
.on { background: linear-gradient(#ffc98a, #fdae5c); border: 1px solid #43426b; }
.letter { font: bold 14px/18px "Liberation Serif", serif; }
.letter.big { font-size: 17px; font-weight: normal; -webkit-text-stroke: 0; }
.fontcolor { width: 16px; border-bottom: 4px solid #f00; color: #2d4a86; font: bold 15px/12px "Liberation Serif", serif; }
.help-dot { width: 14px; height: 14px; border: 1px solid #bcd2f6; border-radius: 50%; outline: 1px solid #3f5fa8; background: #3c78d8; color: #fff; font-weight: bold; line-height: 12px; }
.arr { width: 11px; height: 22px; }
.off { color: #9a9ab0; }
.sep { width: 6px; height: 15px; flex: none; background: linear-gradient(90deg, transparent 2px, #7876a0 2px 3px, #fff 3px 4px, transparent 4px); }
.combo { display: flex; align-items: center; height: 18px; padding-right: 1px; background: linear-gradient(270deg, #fff 1px, #e0dfec 1px 11px, #fff 11px); }
.combo select { flex: 1; min-width: 0; padding-left: 3px; }
.combo .drop { margin: 0 2px 0 3px; }
.zoom { width: 53px; margin: 0 2px; }
.font { width: 117px; margin: 0 3px 0 1px; }
.size { width: 48px; }
.cap { width: 12px; height: 25px; margin-left: 1px; padding-bottom: 3px; align-items: flex-end; border-radius: 0 4px 4px 0; background: linear-gradient(#b0aec8, #6b6893); }
.cap svg { width: 6px; height: 6px; border-top: 1px solid #000; padding-top: 2px; }

/* Working area */
.work { display: grid; grid-template-columns: 232px minmax(0, 1fr) 104px; column-gap: 4px; flex: 1; min-height: 0; padding: 1px 0 2px 3px; }
.shapes { display: flex; flex-direction: column; min-height: 0; padding-top: 1px; }
.panehead { display: flex; align-items: center; justify-content: space-between; height: 22px; padding: 0 5px; background: linear-gradient(#f3f3f9, #cfcee0 60%, #9a98b8); flex: none; }
.panehead h2 { font: bold 12px/14px var(--ui); }
.panehead svg { width: 8px; height: 8px; }
.find { height: 49px; padding: 8px 8px 0; background: linear-gradient(#dcdbe8, #b5b3ca); flex: none; }
.find label { display: block; padding-left: 3px; height: 14px; }
.findrow { display: flex; gap: 8px; }
.findbox { display: flex; flex: 1; height: 18px; background: #fff; }
.findbox input { flex: 1; min-width: 0; padding-left: 1px; }
.go, .go svg { width: 18px; height: 18px; }
.sb { width: 17px; height: 17px; border: 1px solid #8f8ea6; border-radius: 2px; background: linear-gradient(135deg, #fdfdff, #c3c3d4); }
.sb svg { width: 10px; height: 10px; }
.up { transform: rotate(180deg); }
.lt { transform: rotate(90deg); }
.rt { transform: rotate(-90deg); }
.stencil { justify-content: flex-start; gap: 3px; height: 18px; padding-left: 3px; border: 1px solid #9a98b8; border-width: 1px 1px 0 0; background: linear-gradient(#f6f6fb, #d2d1e0); }
.stencil svg { width: 10px; height: 12px; }
.stencilbody { display: flex; flex: 1; min-height: 0; }
.masters {
  display: grid; flex: 1; grid-template-columns: repeat(4, 52px); grid-auto-rows: 58px; align-content: start; list-style: none;
  padding: 5px 0 0 2px; border-top: 1px solid #77779a;
  background: linear-gradient(105deg, #d0dfe1, #8ab4a9 60%);
}
.masters li { display: flex; flex-direction: column; align-items: center; text-align: center; line-height: 11px; font-size: 10px; }
.masters svg { width: 44px; height: 32px; overflow: visible; }
.masters span { width: 54px; }
.masters .sel span { width: 46px; background: #dedde4; }
.vscroll { display: flex; flex-direction: column; width: 16px; background: #f0eff6; }
.vscroll .sb { width: 16px; }
.thumb { border: 1px solid #8f8ea6; border-radius: 2px; background: var(--chip); flex: 1; display: flex; align-items: center; justify-content: center; }

/* Drawing window */
.canvas { display: grid; grid-template: 16px minmax(0, 1fr) 18px / 16px minmax(0, 434fr) minmax(0, 464fr) 16px; border: 1px solid #80809c; border-width: 1px 1px 0 2px; background: #dfdfe3; overflow: hidden; }
.corner { width: 100%; height: 15px; background: #fff; }
.hruler { grid-column: 2 / 4; width: 100%; height: 16px; background: #fff; border-bottom: 1px solid #000; border-left: 1px solid #000; font-size: 9px; }
.vruler { width: 16px; height: 100%; background: #fff; border-right: 1px solid #000; font-size: 9px; }
.drawing { grid-column: 2 / 4; width: 100%; height: 100%; background: #9b99b3; }
.label { font: 11px "Liberation Sans", Arial, sans-serif; text-anchor: middle; fill: #111; }
.strong { font-weight: bold; }
.main { grid-area: 1 / 4 / 3 / 5; }
.main .before { flex: 218; } .main .thumb { flex: 376; } .main .after { flex: 222; }
.pages { grid-column: 1 / 3; display: flex; height: 17px; border-top: 1px solid #000; }
.pages > button { width: 17px; }
.pages svg { width: 8px; height: 10px; }
.pages > .tab { display: grid; width: 66px; height: 17px; }
.tab > * { grid-area: 1 / 1; place-self: center; }
.pages .tab svg { width: 66px; height: 17px; }
.tab b { font-size: 12px; }
.hscroll { display: flex; height: 17px; background: #f3f2f8; }
.hscroll .before { flex: 82; } .hscroll .thumb { flex: 256; } .hscroll .after { flex: 86; }
.split { width: 5px; background: #dfdfe3; border-right: 2px solid #77776f; border-left: 1px solid #fff; }
.ribbed::after { content: ""; width: 8px; height: 8px; background: repeating-linear-gradient(90deg, #9a99b0 0 1px, #fff 1px 2px); }
.vscroll .ribbed::after { background: repeating-linear-gradient(#9a99b0 0 1px, #fff 1px 2px); }
.hscroll .thumb { background: linear-gradient(#f2f2f8, #c9c9da); }

/* Task pane */
.task { overflow: hidden; border: 1px solid #fff; border-width: 0 3px 1px 1px; padding-top: 2px; background: linear-gradient(#f3f2f7, #d8d8e2 40%, #9f9fb5); }
.taskhead { display: flex; align-items: center; gap: 3px; height: 25px; padding: 0 2px 0 3px; background: var(--bar); }
.taskhead h2 { flex: 1; font: bold 12px/14px var(--ui); }
.taskhead button { width: 14px; }
.taskhead .tri { width: 10px; height: 7px; }
.tasknav { display: flex; align-items: center; justify-content: space-around; width: 86px; height: 19px; border-radius: 0 0 5px 0; background: #77749a; }
.tasknav > i { width: 1px; height: 13px; background: #c9c8da; }
.tasknav svg { width: 14px; height: 14px; }
.card { margin: 15px 0 0 5px; border: 1px solid #fff; border-width: 0 0 1px 1px; }
.card h3 { padding-left: 8px; color: #5a5880; font-size: 17px; line-height: 18px; border-radius: 4px 0 0; border-bottom: 1px solid #fff; background: linear-gradient(90deg, #d3d3df, #a3a1bb); }
.cardbody { padding: 8px 0 0 8px; background: #ffffff44; }
.help .cardbody { height: 65px; padding-top: 18px; }
.row { display: flex; gap: 8px; align-items: center; padding-top: 1px; }
.row input { width: 54px; height: 20px; border: 1px solid #9a9ab0; background: #fff; }
.feedback { margin-top: 8px; }
.feedback .cardbody { height: 78px; }
.feedback p { width: 60px; }
.stars { display: flex; gap: 2px; padding: 4px 0; }
.stars svg { width: 16px; height: 16px; }
.card a { display: block; padding-right: 4px; text-align: right; color: #8f8e8a; text-decoration: none; }

/* Status bar */
.status { display: flex; gap: 5px; flex: none; height: 24px; padding: 4px 20px 3px 3px; border-top: 1px solid #85859c; background: #dddee3; }
.status span { width: 150px; border: 1px solid #e8e7d8; }
.status .pageno { width: 102px; margin-left: auto; text-align: center; line-height: 16px; }

/* Taskbar */
.taskbar { display: flex; align-items: center; flex: none; height: 30px; border-top: 1px solid #77779a; background: linear-gradient(#fff, #a9a7c2 15%, #cfcedd 60%, #e6e6ee); }
.start { gap: 5px; width: 97px; height: 29px; padding-right: 12px; border-radius: 0 10px 10px 0; background: linear-gradient(#8fd88a, #3d9c3a 20%, #46a843 60%, #256f24); color: #fff; font: italic bold 16px/20px "Open Sans", var(--ui); text-shadow: 1px 1px 1px #1c4a1c; }
.start svg { width: 20px; height: 18px; }
.quick { display: flex; gap: 7px; padding-left: 12px; }
.quick svg { width: 16px; height: 16px; }
.more { width: 14px; margin: 0 5px 10px 24px; font-weight: bold; font-size: 15px; }
.app { font: italic bold 12px "Liberation Serif", serif; text-anchor: middle; }
.skype { font: bold 12px var(--ui); text-anchor: middle; fill: #fff; }
.dw { font: bold 9px var(--ui); text-anchor: middle; fill: #e3ffb0; }
.windows { display: flex; gap: 3px; flex: 1; min-width: 0; height: 25px; }
.windows button { flex: 1 1 0; min-width: 0; justify-content: flex-start; gap: 5px; padding-left: 8px; border: 1px solid #fff; border-right-color: #8d8ca6; border-bottom-color: #8d8ca6; background: linear-gradient(#fcfcff, #c8c8d8); color: #333; white-space: nowrap; }
.windows svg { width: 16px; height: 16px; }
.windows .drop { width: 6px; height: 4px; margin: 0 3px 0 auto; }
.windows b { color: #f0673a; }
.windows .current { background: linear-gradient(#67707c, #7d8794); border-color: #58606c; color: #fff; }
.lang { margin: 0 9px 0 11px; padding: 2px 0; width: 16px; text-align: center; background: #b1b0c8; }
.tray { display: flex; align-items: center; gap: 3px; height: 29px; width: 103px; }
.tray svg { width: 16px; height: 16px; }
.tray button svg { width: 18px; height: 18px; }
.tray time { padding-left: 3px; font-size: 12px; }
```
